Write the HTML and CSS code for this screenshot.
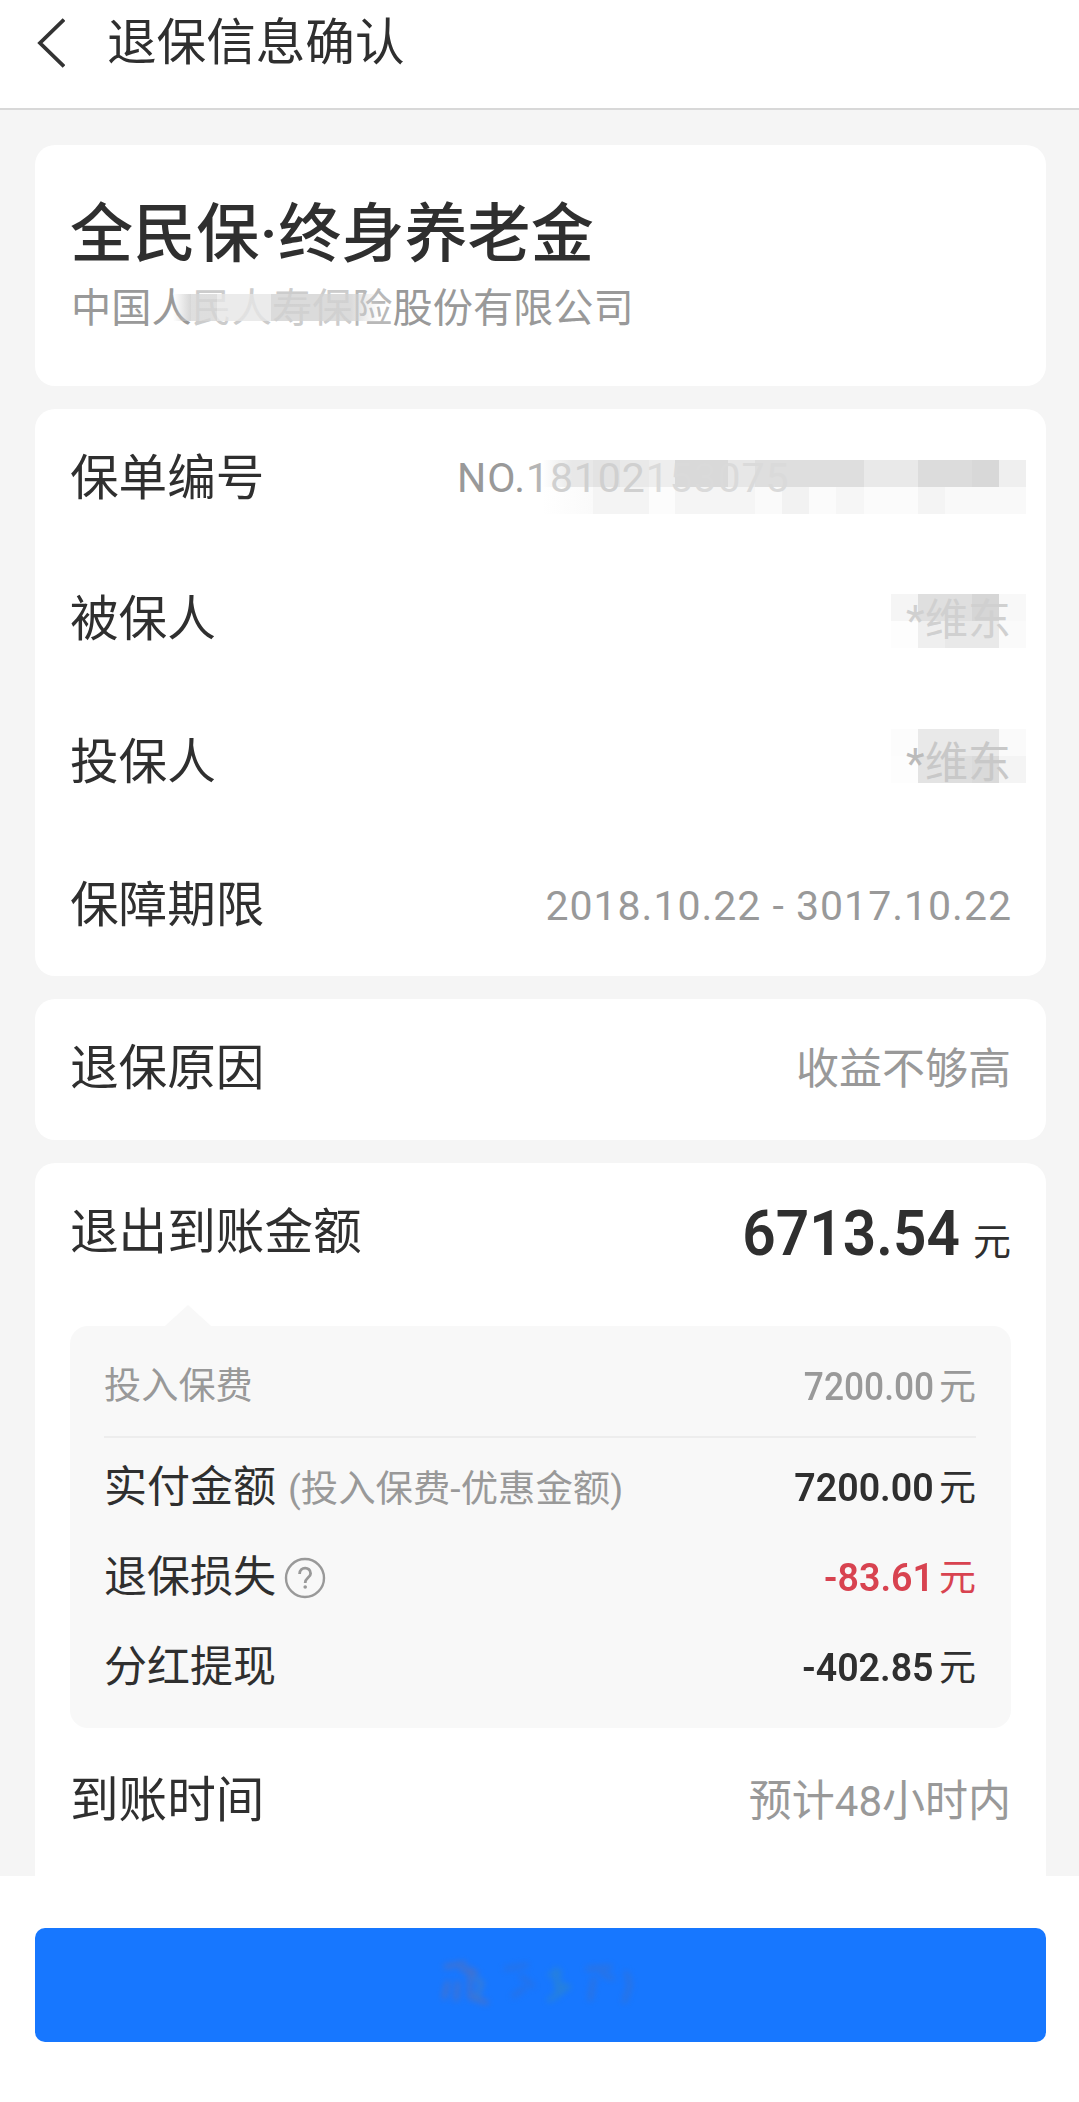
FILE: index.html
```html
<!DOCTYPE html>
<html lang="zh-CN">
  <head>
    <meta charset="UTF-8" />
    <title>退保信息确认</title>
    <link rel="stylesheet" href="styles.css">
  </head>
  <body>
    <header>
      <svg class="back" width="28" height="50" viewBox="0 0 28 50">
        <path d="M27 1.5 L3 25 L27 48.5" fill="none" stroke="#333" stroke-width="3.8" />
      </svg>
      <h1>退保信息确认</h1>
    </header>

    <main>
      <section class="card product">
        <h2>全民保<span class="dot">·</span>终身养老金</h2>
        <p class="company">中国人<span class="masked">民人寿保<i class="mosaic mosaic-company"></i></span><span class="half">险</span>股份有限公司</p>
      </section>

      <section class="card policy">
        <div class="row">
          <span class="label">保单编号</span>
          <span class="value number"><i class="mosaic mosaic-number"></i><span>NO.<span class="fade">1</span><span class="faint">8102</span><span class="fainter">153075</span></span></span>
        </div>
        <div class="row">
          <span class="label">被保人</span>
          <span class="value person"><i class="mosaic mosaic-insured"></i><span class="star faint">*</span><span class="faint">维东</span></span>
        </div>
        <div class="row">
          <span class="label">投保人</span>
          <span class="value person"><i class="mosaic mosaic-holder"></i><span class="star">*</span><span class="faint">维东</span></span>
        </div>
        <div class="row">
          <span class="label">保障期限</span>
          <span class="value period">2018.10.22 - 3017.10.22</span>
        </div>
      </section>

      <section class="card reason">
        <div class="row">
          <span class="label">退保原因</span>
          <span class="value">收益不够高</span>
        </div>
      </section>

      <section class="card refund">
        <div class="row total">
          <span class="label">退出到账金额</span>
          <span class="amount"><b>6713.54</b><span class="unit">元</span></span>
        </div>
        <div class="detail">
          <div class="line premium">
            <span>投入保费</span>
            <span class="money"><b>7200.00</b>元</span>
          </div>
          <div class="line">
            <span>实付金额<span class="note">(投入保费-优惠金额)</span></span>
            <span class="money"><b>7200.00</b>元</span>
          </div>
          <div class="line">
            <span class="with-icon">退保损失
              <svg class="help" width="42" height="42" viewBox="0 0 42 42" fill="none" stroke="#999">
                <circle cx="21" cy="21" r="19" stroke-width="2.4" />
                <path d="M15.6 17 C15.6 9.2 26.6 9.2 26.6 16.4 C26.6 20.6 21.2 20.6 21.2 26" stroke-width="2.8" />
                <circle cx="21.2" cy="30" r="1.8" fill="#999" stroke="none" />
              </svg>
            </span>
            <span class="money loss"><b>-83.61</b>元</span>
          </div>
          <div class="line">
            <span>分红提现</span>
            <span class="money"><b>-402.85</b>元</span>
          </div>
        </div>
        <div class="row arrival">
          <span class="label">到账时间</span>
          <span class="value">预计<span class="hours">48</span>小时内</span>
        </div>
      </section>
    </main>

    <footer>
      <button type="button">
        <svg class="smudge" width="210" height="56" viewBox="0 0 210 56" fill="none" stroke-width="4">
          <path d="M8 10 L30 6 M12 24 L8 42 M24 12 L42 16 M22 24 L20 44 M34 10 L34 40 L52 46" stroke="#5a6fb4" />
          <path d="M38 20 L46 26 L40 42" stroke="#4a7fc0" />
          <path d="M68 12 L92 8 M84 18 L98 30 M76 40 L90 30" stroke="#2f6fd8" />
          <path d="M112 18 L126 16 M118 24 L132 30 L112 44 M120 10 L122 40" stroke="#2f86c8" />
          <path d="M150 12 L176 10 M158 20 L154 44 M164 16 L178 22 M190 14 L194 28 L188 46" stroke="#3a70cc" />
        </svg>
      </button>
    </footer>
  </body>
</html>
```

FILE: styles.css
```css
* {
  box-sizing: border-box;
}

body {
  margin: 0;
  font-family: Roboto, "Noto Sans CJK SC", sans-serif;
  color: #2f2f2f;
  background-color: #fff;
  line-height: 1;
}

header {
  display: flex;
  align-items: flex-start;
  height: 110px;
  padding: 18px 37px 0;
  border-bottom: 2px solid #d8d8d8;
}

h1 {
  margin: 1px 0 0 42px;
  font-size: 49.6px;
  font-weight: 400;
}

.back {
  display: block;
}

main {
  display: flex;
  flex-direction: column;
  gap: 23px;
  height: 1766px;
  padding: 35px 33px 0 35px;
  background-color: #f5f5f5;
}

.card {
  padding: 0 35px;
  border-radius: 20px;
  background-color: #fff;
}

.product {
  height: 241px;
  padding-top: 58px;
}

h2 {
  margin: 0;
  font-size: 63.1px;
  font-weight: 500;
}

.dot {
  display: inline-block;
  width: 19px;
  text-align: center;
}

.company {
  margin: 23px 0 0;
  padding-left: 1px;
  font-size: 40.2px;
  color: #999;
}

.masked {
  position: relative;
  color: #ccc;
}

.half {
  color: #b8b8b8;
}

.policy {
  height: 567px;
}

.row {
  display: flex;
  justify-content: space-between;
  align-items: center;
  height: 143px;
}

.policy .row:first-child {
  height: 140px;
}

.label {
  font-size: 48.6px;
}

.value {
  font-size: 43px;
  color: #999;
}

.period,
.number {
  font-size: 41px;
  letter-spacing: 1px;
}

.period {
  margin-right: -1px;
}

.number {
  position: relative;
  width: 554px;
  letter-spacing: 0.9px;
}

.number > span {
  position: relative;
}

.person {
  position: relative;
  display: flex;
}

.person span {
  position: relative;
}

.star {
  width: 19px;
  color: #bbb;
}

.fade {
  color: #b5b5b5;
}

.faint {
  color: #d0d0d0;
}

.fainter {
  color: #dadada;
}

/* grey blocks that hide personal data */
.mosaic {
  position: absolute;
  height: 54px;
  background-repeat: no-repeat;
  background-size: 100% 27px;
  background-position: 0 0, 0 27px;
}

.mosaic-company {
  left: -19px;
  top: 9px;
  width: 206px;
  height: 27px;
  opacity: 0.8;
  background-size: 100% 100%;
  background-image: linear-gradient(90deg, transparent, #ccc 18px, #d6d6d6 18px 44px, #e6e6e6 44px 98px, #d2d2d2 98px 178px, transparent);
}

.mosaic-number {
  left: 85px;
  top: 2px;
  width: 484px;
  background-image:
    linear-gradient(90deg, #fff, #e8e8e8 30px 51px, #e3e3e3 51px 78px, #e9e9e9 78px 107px, #eee 107px 133px, #d9d9d9 133px 186px, #e7e7e7 186px 213px, #dedede 213px 322px, #e9e9e9 322px 376px, #dcdcdc 376px 430px, #d8d8d8 430px 457px, #efefef 457px),
    linear-gradient(90deg, #fff, #fafafa 51px, #f4f4f4 51px 107px, #fcfcfc 107px 133px, #f5f5f5 133px 213px, #fafafa 213px 240px, #f2f2f2 240px 267px, #fbfbfb 267px 294px, #f6f6f6 294px 322px, #fbfbfb 322px 376px, #f4f4f4 376px 403px, #f9f9f9 403px);
}

.mosaic-insured,
.mosaic-holder {
  right: -15px;
  width: 135px;
}

.mosaic-insured {
  top: -5px;
  background-image:
    linear-gradient(90deg, #f5f5f5 27px, #dfdfdf 27px 81px, #d6d6d6 81px 108px, #f8f8f8 108px),
    linear-gradient(90deg, #fdfdfd 27px, #efefef 27px 54px, #e9e9e9 54px 108px, #fafafa 108px);
}

.mosaic-holder {
  top: -13px;
  background-image:
    linear-gradient(90deg, #fcfcfc 27px, #e9e9e9 27px 108px, #fafafa 108px),
    linear-gradient(90deg, #fdfdfd 27px, #e3e3e3 27px 54px, #dedede 54px 81px, #dadada 81px 108px, #f4f4f4 108px);
}

.mosaic-holder ~ .faint {
  color: #c8c8c8;
}

.reason .row {
  height: 141px;
}

.refund {
  height: 714px;
  border-radius: 20px 20px 0 0;
}

.total {
  height: 140px;
}

.amount {
  display: flex;
  align-items: baseline;
  padding-top: 2px;
}

.amount b {
  font-size: 63px;
  font-weight: 600;
  letter-spacing: 0;
  transform: scaleX(0.93);
  transform-origin: right;
}

.unit {
  margin-left: 13px;
  font-size: 38px;
}

.detail {
  position: relative;
  height: 402px;
  margin: 23px 0 0;
  padding: 12px 35px 0 34px;
  border-radius: 18px;
  background-color: #f8f8f8;
}

.detail::before {
  content: "";
  position: absolute;
  left: 95px;
  top: -21px;
  border: 23px solid transparent;
  border-top-width: 0;
  border-bottom: 21px solid #f8f8f8;
}

.line {
  display: flex;
  justify-content: space-between;
  align-items: center;
  height: 90px;
  font-size: 43px;
}

.premium {
  height: 100px;
  margin-bottom: 5px;
  border-bottom: 2px solid #ededed;
  font-size: 37.2px;
  color: #999;
}

.note {
  margin-left: 12px;
  font-size: 37.4px;
  color: #999;
}

.money {
  font-size: 37px;
}

.money b {
  display: inline-block;
  margin-right: 5px;
  font-size: 39.5px;
  font-weight: 600;
  letter-spacing: 0;
  transform: scaleX(0.95);
  transform-origin: right;
}

.premium .money b {
  font-size: 38px;
  font-weight: 500;
  transform: scaleX(0.93);
}

.loss {
  color: #d84350;
}

.with-icon {
  display: flex;
  align-items: center;
}

.help {
  margin-left: 8px;
}

.arrival {
  height: 147px;
}

.hours {
  font-size: 42px;
}

footer {
  height: 226px;
  padding: 52px 33px 0 35px;
}

button {
  display: flex;
  align-items: center;
  justify-content: center;
  width: 100%;
  height: 114px;
  border: none;
  border-radius: 10px;
  background-color: #1777ff;
}

.smudge {
  opacity: 0.75;
  filter: blur(3px);
}
```
